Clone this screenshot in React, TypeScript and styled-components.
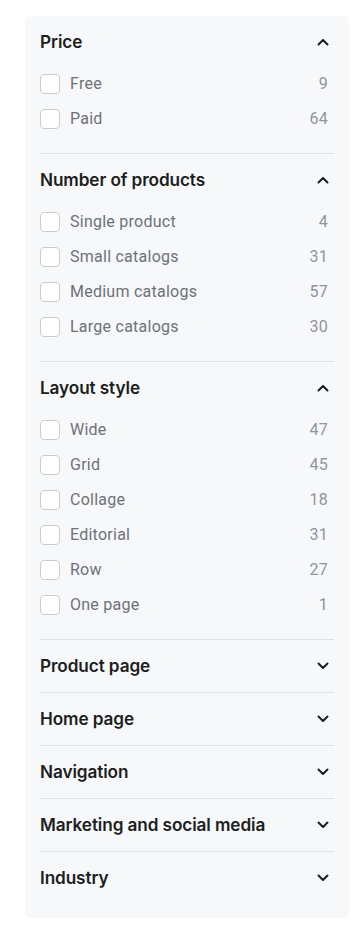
import { FC } from "react";
import styled, { createGlobalStyle } from "styled-components";

const GlobalStyle = createGlobalStyle`
  body {
    margin: 0;
    background: #ffffff;
    font-family: Roboto, "Liberation Sans", sans-serif;
  }
`;

const Page = styled.div`
  padding: 16px 15px 10px 25px;
`;

const Panel = styled.aside`
  width: 324px;
  box-sizing: border-box;
  background-color: #f7f8fa;
  border-radius: 5px;
  padding: 0 15px 14px 15px;
`;

const Section = styled.section`
  border-top: 1px solid #dfe1e4;

  &:first-child {
    border-top: none;
  }
`;

const SectionHeader = styled.div<{ $open: boolean }>`
  display: flex;
  align-items: center;
  justify-content: space-between;
  padding: 14px 5px ${(p) => (p.$open ? "12px" : "14px")} 0;
  line-height: 24px;
`;

const SectionTitle = styled.h3`
  margin: 0;
  font-family: Inter, "Noto Sans", sans-serif;
  font-size: 17.2px;
  font-weight: 600;
  letter-spacing: -0.1px;
  color: #1c1e21;
`;

const OptionList = styled.ul`
  list-style: none;
  margin: 0;
  padding: 0 0 17px 0;
`;

const OptionRow = styled.li`
  height: 35px;
  display: flex;
  align-items: center;
  padding-right: 6px;
`;

const CheckBox = styled.span`
  width: 18px;
  height: 18px;
  border: 1px solid #c9ccd1;
  border-radius: 4px;
  background: #ffffff;
  flex-shrink: 0;
`;

const OptionLabel = styled.span`
  margin-left: 10px;
  flex: 1;
  font-size: 16px;
  letter-spacing: 0.25px;
  color: #6d7278;
`;

const OptionCount = styled.span`
  font-size: 16px;
  letter-spacing: 0.25px;
  color: #8f959c;
`;

const Chevron: FC<{ up: boolean }> = ({ up }) => (
  <svg width="12" height="8" viewBox="0 0 12 8" fill="none">
    <path
      d={up ? "M1.5 6.5 L6 2 L10.5 6.5" : "M1.5 1.5 L6 6 L10.5 1.5"}
      stroke="#1c1e21"
      strokeWidth="2"
      strokeLinecap="round"
      strokeLinejoin="round"
    />
  </svg>
);

type Option = { label: string; count: number };
type Filter = { title: string; options?: Option[] };

const filters: Filter[] = [
  {
    title: "Price",
    options: [
      { label: "Free", count: 9 },
      { label: "Paid", count: 64 },
    ],
  },
  {
    title: "Number of products",
    options: [
      { label: "Single product", count: 4 },
      { label: "Small catalogs", count: 31 },
      { label: "Medium catalogs", count: 57 },
      { label: "Large catalogs", count: 30 },
    ],
  },
  {
    title: "Layout style",
    options: [
      { label: "Wide", count: 47 },
      { label: "Grid", count: 45 },
      { label: "Collage", count: 18 },
      { label: "Editorial", count: 31 },
      { label: "Row", count: 27 },
      { label: "One page", count: 1 },
    ],
  },
  { title: "Product page" },
  { title: "Home page" },
  { title: "Navigation" },
  { title: "Marketing and social media" },
  { title: "Industry" },
];

const App: FC = () => {
  return (
    <Page>
      <GlobalStyle />
      <Panel>
        {filters.map((f) => {
          const open = !!f.options;
          return (
            <Section key={f.title}>
              <SectionHeader $open={open}>
                <SectionTitle>{f.title}</SectionTitle>
                <Chevron up={open} />
              </SectionHeader>
              {open && (
                <OptionList>
                  {f.options!.map((o) => (
                    <OptionRow key={o.label}>
                      <CheckBox />
                      <OptionLabel>{o.label}</OptionLabel>
                      <OptionCount>{o.count}</OptionCount>
                    </OptionRow>
                  ))}
                </OptionList>
              )}
            </Section>
          );
        })}
      </Panel>
    </Page>
  );
};

export default App;
